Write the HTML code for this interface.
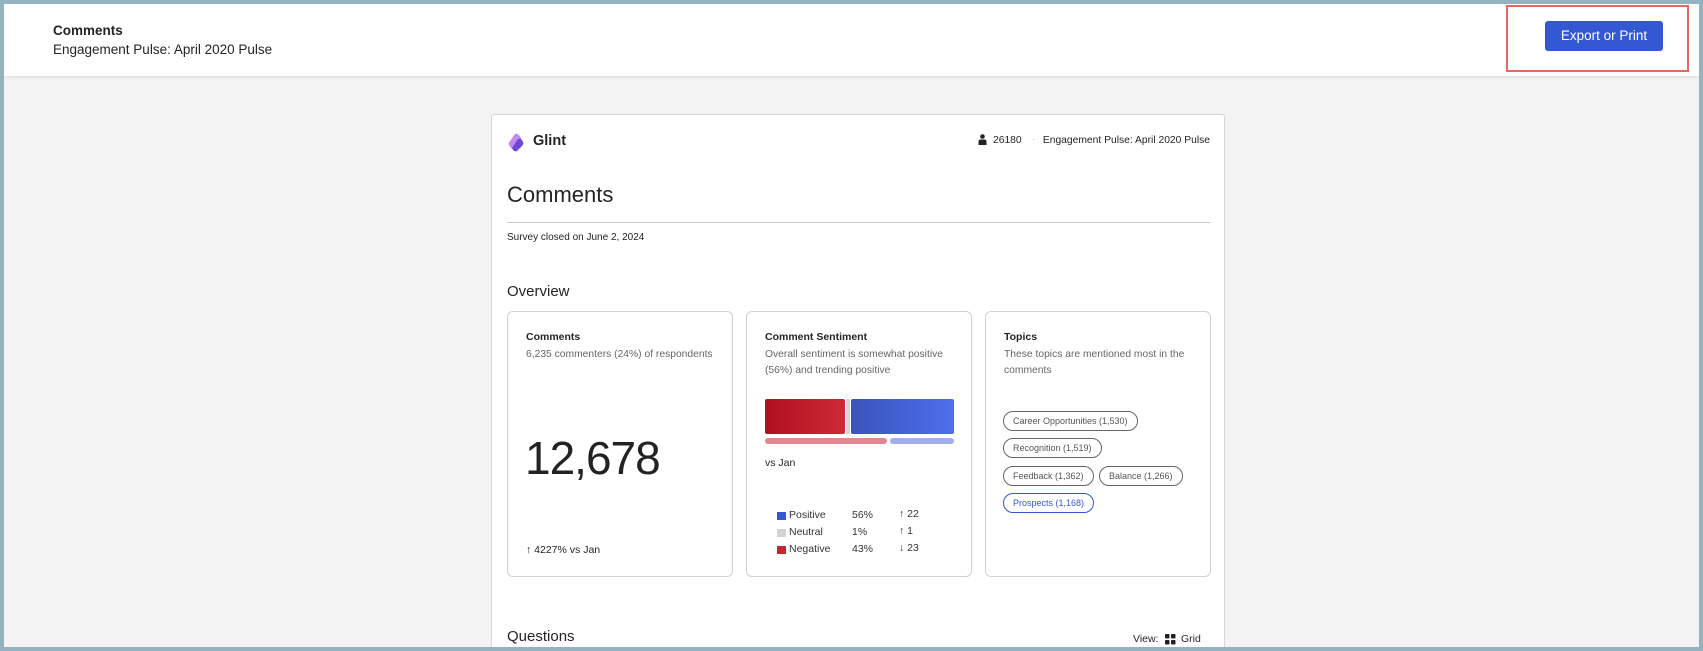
<!DOCTYPE html>
<html><head><meta charset="utf-8"><style>
*{margin:0;padding:0;box-sizing:border-box}
body{width:1703px;height:651px;overflow:hidden;background:#94b3c1;font-family:"Liberation Sans",sans-serif;color:#242424;position:relative}
.a{position:absolute;white-space:nowrap}
#frame{position:absolute;left:4px;top:4px;width:1695px;height:643px;background:#f3f3f3;overflow:hidden}
#top{position:absolute;left:0;top:0;width:1695px;height:72px;background:#fff;box-shadow:0 1px 3px rgba(0,0,0,.1)}
#card{position:absolute;left:487px;top:110px;width:734px;height:560px;background:#fff;border:1px solid #d6d6d6;border-radius:3px}
.box{position:absolute;top:196px;width:226px;height:266px;border:1px solid #d1d1d1;border-radius:6px;background:#fff}
.bt{font-size:10.5px;font-weight:bold;color:#242424}
.bs{font-size:10.3px;color:#666;line-height:16px;white-space:normal}
.pill{position:absolute;height:20px;border:1px solid #666;border-radius:10px;font-size:9px;color:#555;line-height:18px;padding:0 9px;white-space:nowrap}
.lg{font-size:10.5px;color:#333}
</style></head><body>
<div id="frame">
 <div id="top">
  <div class="a" style="left:49px;top:19px;font-size:13.5px;font-weight:bold">Comments</div>
  <div class="a" style="left:49px;top:38px;font-size:13.5px">Engagement Pulse: April 2020 Pulse</div>
  <div class="a" style="left:1502px;top:1px;width:183px;height:67px;border:2px solid #e8675c"></div>
  <div class="a" style="left:1541px;top:17px;width:118px;height:30px;background:#3358d4;border-radius:3px;color:#fff;font-size:13.5px;line-height:30px;text-align:center">Export or Print</div>
 </div>
 <div id="card">
  <svg class="a" style="left:15px;top:18px" width="20" height="20" viewBox="0 0 20 20"><path d="M8 1 Q10 0 12 2 L14 5 Q15 7 13 9 L8 15 Q6 17 4 15 L2 12 Q1 10 3 8 Z" fill="#c08cf2"/><path d="M11 6 Q13 5 15 7 L16 9 Q17 11 15 13 L10 18 Q8 19 6 17 L5 15 Z" fill="#7048d8"/></svg>
  <div class="a" style="left:41px;top:18px;font-size:14.5px;font-weight:bold">Glint</div>
  <svg class="a" style="left:486px;top:19px" width="9" height="11" viewBox="0 0 9 11"><circle cx="4.5" cy="2.5" r="2.3" fill="#222"/><path d="M0.5 11 V7.5 Q0.5 5.5 2.5 5.5 H6.5 Q8.5 5.5 8.5 7.5 V11 Z" fill="#222"/></svg>
  <div class="a" style="left:501px;top:20px;font-size:10.3px">26180</div>
  <div class="a" style="left:540px;top:19px;font-size:10px;color:#bbb">·</div>
  <div class="a" style="left:0;width:718px;text-align:right;top:20px;font-size:10.3px">Engagement Pulse: April 2020 Pulse</div>
  <div class="a" style="left:15px;top:67px;font-size:22px">Comments</div>
  <div class="a" style="left:15px;top:107px;width:703px;height:1px;background:#c8c8c8"></div>
  <div class="a" style="left:15px;top:117px;font-size:10px">Survey closed on June 2, 2024</div>
  <div class="a" style="left:15px;top:168px;font-size:15px">Overview</div>

  <div class="box" style="left:15px">
   <div class="a bt" style="left:18px;top:19px">Comments</div>
   <div class="a bs" style="left:18px;top:35px">6,235 commenters (24%) of respondents</div>
   <div class="a" style="left:17px;top:119px;font-size:46px;font-weight:300;letter-spacing:-1px;color:#222">12,678</div>
   <div class="a" style="left:18px;top:232px;font-size:10.5px">↑ 4227% vs Jan</div>
  </div>

  <div class="box" style="left:254px">
   <div class="a bt" style="left:18px;top:19px">Comment Sentiment</div>
   <div class="a bs" style="left:18px;top:35px;width:195px">Overall sentiment is somewhat positive (56%) and trending positive</div>
   <div class="a" style="left:18px;top:87px;width:80px;height:35px;border-radius:2px;background:linear-gradient(90deg,#b0111f,#cd2a37)"></div>
   <div class="a" style="left:99px;top:87px;width:4px;height:35px;background:#d6d6d6"></div>
   <div class="a" style="left:104px;top:87px;width:103px;height:35px;border-radius:2px;background:linear-gradient(90deg,#3a54bb,#4e6fec)"></div>
   <div class="a" style="left:18px;top:126px;width:122px;height:6px;border-radius:3px;background:#e0888f"></div>
   <div class="a" style="left:143px;top:126px;width:64px;height:6px;border-radius:3px;background:#a3aeea"></div>
   <div class="a" style="left:18px;top:145px;font-size:10.5px">vs Jan</div>
   <div class="a" style="left:30px;top:200px;width:9px;height:8px;background:#3358d4"></div>
   <div class="a" style="left:30px;top:217px;width:9px;height:8px;background:#d3d3d3"></div>
   <div class="a" style="left:30px;top:234px;width:9px;height:8px;background:#c4262e"></div>
   <div class="a lg" style="left:42px;top:197px">Positive</div>
   <div class="a lg" style="left:42px;top:214px">Neutral</div>
   <div class="a lg" style="left:42px;top:231px">Negative</div>
   <div class="a lg" style="left:105px;top:197px">56%</div>
   <div class="a lg" style="left:105px;top:214px">1%</div>
   <div class="a lg" style="left:105px;top:231px">43%</div>
   <div class="a lg" style="left:152px;top:196px">↑ 22</div>
   <div class="a lg" style="left:152px;top:213px">↑ 1</div>
   <div class="a lg" style="left:152px;top:230px">↓ 23</div>
  </div>

  <div class="box" style="left:493px">
   <div class="a bt" style="left:18px;top:19px">Topics</div>
   <div class="a bs" style="left:18px;top:35px;width:195px">These topics are mentioned most in the comments</div>
   <div class="pill" style="left:17px;top:99px">Career Opportunities (1,530)</div>
   <div class="pill" style="left:17px;top:126px">Recognition (1,519)</div>
   <div class="pill" style="left:17px;top:154px">Feedback (1,362)</div>
   <div class="pill" style="left:113px;top:154px">Balance (1,266)</div>
   <div class="pill" style="left:17px;top:181px;border-color:#3358d4;color:#3358d4">Prospects (1,168)</div>
  </div>

  <div class="a" style="left:15px;top:513px;font-size:15px">Questions</div>
  <div class="a" style="left:641px;top:518px;font-size:10.5px">View:</div>
  <svg class="a" style="left:673px;top:519px" width="11" height="11" viewBox="0 0 11 11"><rect x="0" y="0" width="4.5" height="4.5" rx="1" fill="#222"/><rect x="6" y="0" width="4.5" height="4.5" rx="1" fill="#222"/><rect x="0" y="6" width="4.5" height="4.5" rx="1" fill="#222"/><rect x="6" y="6" width="4.5" height="4.5" rx="1" fill="#222"/></svg>
  <div class="a" style="left:689px;top:518px;font-size:10.5px">Grid</div>
 </div>
</div>
</body></html>
